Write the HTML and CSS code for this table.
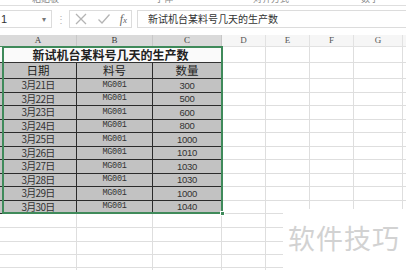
FILE: index.html
```html
<!DOCTYPE html>
<html>
<head>
<meta charset="utf-8">
<link rel="stylesheet" href="styles.css">
</head>
<body>
<div class="app">
  <div class="ribbon">
    <span class="rl rl1">粘贴板</span>
    <span class="rl rl2">字体</span>
    <span class="rl rl3">对齐方式</span>
    <span class="rl rl4">数字</span>
  </div>
  <div class="fbar">
    <div class="namebox"><span class="nb-text">1</span><span class="nb-arrow">▾</span></div>
    <div class="fsep">⋮</div>
    <div class="fbtns">
      <svg class="ic" width="14" height="14" viewBox="0 0 14 14"><path d="M2 2 L12 12 M12 2 L2 12" stroke="#b4b4b4" stroke-width="1.3" fill="none"/></svg>
      <svg class="ic" width="14" height="14" viewBox="0 0 14 14"><path d="M1.5 7.5 L5 11 L12.5 2.5" stroke="#b4b4b4" stroke-width="1.3" fill="none"/></svg>
      <span class="fx"><i>f</i><i class="x">x</i></span>
    </div>
    <div class="finput">新试机台某料号几天的生产数</div>
  </div>
  <table class="sheet">
    <colgroup>
      <col class="cA"><col class="cB"><col class="cC"><col class="cD"><col class="cE"><col class="cF"><col class="cG"><col class="cH">
    </colgroup>
    <thead>
      <tr class="hdr">
        <th class="hsel">A</th><th class="hsel">B</th><th class="hsel">C</th><th>D</th><th>E</th><th>F</th><th>G</th><th></th>
      </tr>
    </thead>
    <tbody>
      <tr class="r-title"><td colspan="3" class="title">新试机台某料号几天的生产数</td><td></td><td></td><td></td><td></td><td></td></tr>
      <tr class="r-head"><td class="d hd">日期</td><td class="d hd">料号</td><td class="d hd">数量</td><td></td><td></td><td></td><td></td><td></td></tr>
      <tr class="r-data"><td class="d dt">3月21日</td><td class="d mg">MG001</td><td class="d num">300</td><td></td><td></td><td></td><td></td><td></td></tr>
      <tr class="r-data"><td class="d dt">3月22日</td><td class="d mg">MG001</td><td class="d num">500</td><td></td><td></td><td></td><td></td><td></td></tr>
      <tr class="r-data"><td class="d dt">3月23日</td><td class="d mg">MG001</td><td class="d num">600</td><td></td><td></td><td></td><td></td><td></td></tr>
      <tr class="r-data"><td class="d dt">3月24日</td><td class="d mg">MG001</td><td class="d num">800</td><td></td><td></td><td></td><td></td><td></td></tr>
      <tr class="r-data"><td class="d dt">3月25日</td><td class="d mg">MG001</td><td class="d num">1000</td><td></td><td></td><td></td><td></td><td></td></tr>
      <tr class="r-data"><td class="d dt">3月26日</td><td class="d mg">MG001</td><td class="d num">1010</td><td></td><td></td><td></td><td></td><td></td></tr>
      <tr class="r-data"><td class="d dt">3月27日</td><td class="d mg">MG001</td><td class="d num">1030</td><td></td><td></td><td></td><td></td><td></td></tr>
      <tr class="r-data"><td class="d dt">3月28日</td><td class="d mg">MG001</td><td class="d num">1030</td><td></td><td></td><td></td><td></td><td></td></tr>
      <tr class="r-data"><td class="d dt">3月29日</td><td class="d mg">MG001</td><td class="d num">1000</td><td></td><td></td><td></td><td></td><td></td></tr>
      <tr class="r-data"><td class="d dt">3月30日</td><td class="d mg">MG001</td><td class="d num">1040</td><td></td><td></td><td></td><td></td><td></td></tr>
      <tr class="r-empty"><td></td><td></td><td></td><td></td><td></td><td></td><td></td><td></td></tr>
      <tr class="r-empty"><td></td><td></td><td></td><td></td><td></td><td></td><td></td><td></td></tr>
      <tr class="r-empty2"><td></td><td></td><td></td><td></td><td></td><td></td><td></td><td></td></tr>
      <tr class="r-empty2"><td></td><td></td><td></td><td></td><td></td><td></td><td></td><td></td></tr>
      <tr class="r-empty2"><td></td><td></td><td></td><td></td><td></td><td></td><td></td><td></td></tr>
    </tbody>
  </table>
  <div class="selection"><span class="handle"></span></div>
  <div class="watermark">软件技巧</div>
</div>
</body>
</html>
```

FILE: styles.css
```css
* { box-sizing: border-box; }
html, body { margin: 0; padding: 0; background: #fff; }
body { width: 406px; height: 270px; overflow: hidden; font-family: "Noto Sans CJK SC", "Liberation Sans", sans-serif; }

.app { position: relative; width: 406px; height: 270px; overflow: hidden; }

.ribbon {
  height: 6px;
  border-bottom: 1px solid #dedede;
  overflow: hidden;
  position: relative;
  display: flex;
}
.rl { font-size: 9px; line-height: 9px; color: #8a8a8a; margin-top: -6px; white-space: nowrap; }
.rl1 { margin-left: 32px; }
.rl2 { margin-left: 96px; }
.rl3 { margin-left: 80px; }
.rl4 { margin-left: 72px; }

.fbar {
  height: 29px;
  display: flex;
  align-items: flex-start;
  padding-top: 4px;
  background: #fff;
}
.namebox {
  width: 52px; height: 18px;
  border: 1px solid #dcdcdc; border-left: none;
  display: flex; align-items: center; justify-content: space-between;
  padding: 0 5px 0 1px;
  font-family: "Liberation Sans", sans-serif; font-size: 11px; color: #333;
}
.nb-arrow { font-size: 8px; color: #777; }
.fsep { width: 17px; text-align: center; color: #b5b5b5; font-size: 10px; line-height: 18px; }
.fbtns {
  width: 63px; height: 18px;
  border: 1px solid #dcdcdc;
  display: flex; align-items: center; justify-content: space-between;
  padding: 0 4px 0 4px;
}
.fx { font-family: "Liberation Serif", serif; font-size: 12px; color: #666; line-height: 14px; }
.fx .x { font-size: 9px; }
.finput {
  flex: 1; height: 18px; margin-left: 5px;
  border: 1px solid #dcdcdc; border-right: none;
  padding-left: 10px;
  font-size: 10px; line-height: 16px; color: #333;
}

.sheet {
  border-collapse: separate; border-spacing: 0;
  table-layout: fixed; width: 450px;
}
.cA { width: 77px; } .cB { width: 76px; } .cC { width: 69px; } .cD { width: 44px; }
.cE { width: 44px; } .cF { width: 44px; } .cG { width: 49px; } .cH { width: 47px; }

.sheet td, .sheet th { padding: 0; border-right: 1px solid #dedede; border-bottom: 1px solid #dedede; overflow: hidden; white-space: nowrap; }

.hdr th {
  height: 12px;
  font-family: "Liberation Serif", serif; font-weight: normal; font-size: 9px; line-height: 11px; vertical-align: bottom;
  color: #555; background: #f6f6f6; border-right-color: #e2e2e2; border-bottom-color: #e2e2e2;
}
.hdr th.hsel { background: #dadada; border-right-color: #c8c8c8; border-bottom: 1px solid #4a8a5e; color: #3a3a3a; }

.r-title td { height: 16px; }
.r-head td { height: 16px; }
.r-data td { height: 13.5px; }
.r-empty td { height: 14px; }
.r-empty2 td { height: 13px; }

.title {
  background: #fafafa; text-align: center;
  font-size: 12px; font-weight: 700; color: #222; line-height: 13px;
  border-right: 1px solid #333 !important; border-bottom: 1px solid #333 !important;
}
.d { background: #c2c2c2; text-align: center; color: #333; border-right: 1px solid #2b2b2b !important; border-bottom: 1px solid #2b2b2b !important; }
.hd { font-size: 11.5px; line-height: 13px; color: #222; }
.dt { font-size: 10px; line-height: 12px; letter-spacing: -0.7px; }
.mg { font-family: "Liberation Mono", monospace; font-size: 8.5px; line-height: 11px; letter-spacing: -0.3px; }
.num { font-family: "Liberation Sans", sans-serif; font-size: 9.5px; line-height: 11px; letter-spacing: -0.3px; }

.selection {
  position: absolute; left: 2px; top: 46px; width: 221px; height: 168px;
  border: 2px solid #3f8a5a;
  pointer-events: none;
}
.handle {
  position: absolute; right: -4px; bottom: -4px; width: 5px; height: 5px;
  background: #3f8a5a; border: 1px solid #fff;
}

.watermark {
  position: absolute; left: 283px; top: 209px; right: 0; bottom: 0;
  background: #fff;
  padding-left: 5px; padding-top: 12px;
  font-size: 27px; line-height: 34px; color: #d2d2d2; letter-spacing: 1px;
}
```
